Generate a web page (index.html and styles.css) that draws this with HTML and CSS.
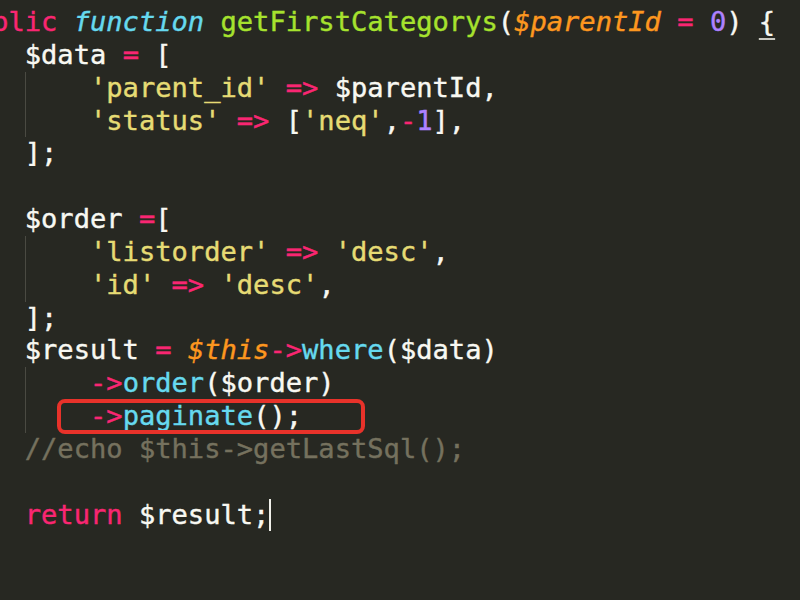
FILE: index.html
```html
<!DOCTYPE html>
<html lang="en">
<head>
<meta charset="utf-8">
<title>getFirstCategorys</title>
<link rel="stylesheet" href="styles.css">
</head>
<body>
<div class="editor">
<div class="code">
<div class="line"><span class="k">public</span> <span class="st">function</span> <span class="fn">getFirstCategorys</span>(<span class="pa">$parentId</span> <span class="k">=</span> <span class="n">0</span>) <span class="match">{</span></div>
<div class="line">    $data <span class="k">=</span> [</div>
<div class="line">    <span class="guide">    </span><span class="s">'parent_id'</span> <span class="k">=&gt;</span> $parentId,</div>
<div class="line">    <span class="guide">    </span><span class="s">'status'</span> <span class="k">=&gt;</span> [<span class="s">'neq'</span>,<span class="k">-</span><span class="n">1</span>],</div>
<div class="line">    ];</div>
<div class="line"> </div>
<div class="line">    $order <span class="k">=</span>[</div>
<div class="line">    <span class="guide">    </span><span class="s">'listorder'</span> <span class="k">=&gt;</span> <span class="s">'desc'</span>,</div>
<div class="line">    <span class="guide">    </span><span class="s">'id'</span> <span class="k">=&gt;</span> <span class="s">'desc'</span>,</div>
<div class="line">    ];</div>
<div class="line">    $result <span class="k">=</span> <span class="pa">$this</span><span class="k">-&gt;</span><span class="c">where</span>($data)</div>
<div class="line">    <span class="guide">    </span><span class="k">-&gt;</span><span class="c">order</span>($order)</div>
<div class="line">    <span class="guide">    </span><span class="k">-&gt;</span><span class="c">paginate</span>();<span class="mark"></span></div>
<div class="line">    <span class="cm">//echo $this-&gt;getLastSql();</span></div>
<div class="line"> </div>
<div class="line">    <span class="k">return</span> $result;<span class="cursor"></span></div>
</div>
</div>
</body>
</html>
```
FILE: styles.css
```css
html, body {
  margin: 0;
  padding: 0;
  background: #272822;
  overflow: hidden;
}

.editor {
  width: 800px;
  height: 600px;
  overflow: hidden;
  background: #272822;
}

.code {
  margin-left: -40.5px;
  padding-top: 6px;
  font-family: "DejaVu Sans Mono", "Liberation Mono", monospace;
  font-size: 27.1px;
  line-height: 32.85px;
  color: #f8f8f2;
  -webkit-text-stroke: 0.4px currentColor;
}

.line {
  position: relative;
  height: 32.85px;
  white-space: pre;
}

.k { color: #f92672; }
.st { color: #66d9ef; font-style: italic; }
.fn { color: #a6e22e; }
.pa { color: #fd971f; font-style: italic; }
.n { color: #ae81ff; }
.s { color: #e6db74; }
.c { color: #66d9ef; }
.cm { color: #75715e; }

.match {
  text-decoration: underline;
  text-decoration-color: #c8c8c0;
  text-decoration-thickness: 2px;
  text-underline-offset: 7px;
}

.guide {
  display: inline-block;
  height: 32.85px;
  vertical-align: top;
  box-shadow: inset 1px 0 0 #4a4a42;
}

.mark {
  position: absolute;
  left: 97.5px;
  top: -1px;
  width: 300px;
  height: 27px;
  border: 4px solid #e8322a;
  border-radius: 8px;
}

.cursor {
  display: inline-block;
  width: 2px;
  height: 32px;
  vertical-align: top;
  background: #f0f0ea;
}
```
